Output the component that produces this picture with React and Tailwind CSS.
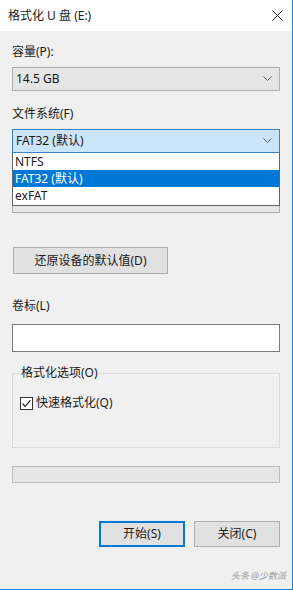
import React from 'react';

const font = { fontFamily: '"Noto Sans", "Noto Sans CJK SC", sans-serif' };

function Chevron() {
  return (
    <svg width="9" height="6" viewBox="0 0 9 6" className="shrink-0">
      <path d="M0.5 0.5 L4.5 4.5 L8.5 0.5" fill="none" stroke="#606060" strokeWidth="1" />
    </svg>
  );
}

function Combo({ value, focused, hidden }) {
  return (
    <div
      className={`h-6 flex items-center justify-between pl-[3px] pr-[7px] border ${
        focused ? 'bg-[#cce4f7] border-[#3c82c4]' : 'bg-[#e5e5e5] border-[#adadad]'
      }`}
    >
      <span className={`text-[12px] leading-4 text-[#1a1a1a] ${hidden ? 'invisible' : ''}`}>{value}</span>
      <Chevron />
    </div>
  );
}

function Button({ children, primary, className = '' }) {
  return (
    <div
      className={`flex items-center justify-center text-[12px] leading-4 text-[#1a1a1a] bg-[#e1e1e1] ${
        primary ? 'border-2 border-[#0078d7]' : 'border border-[#adadad]'
      } ${className}`}
    >
      {children}
    </div>
  );
}

export default function App() {
  return (
    <div
      className="relative w-[293px] h-[590px] bg-[#f0f0f0] border-r border-b border-[#1c7fd3] flex flex-col text-[#1a1a1a]"
      style={font}
    >
      {/* title bar */}
      <div className="h-[31px] bg-white flex items-center justify-between pl-2 pr-[9px] shrink-0">
        <span className="text-[12px] leading-4">格式化 U 盘 (E:)</span>
        <svg width="11" height="11" viewBox="0 0 11 11">
          <path d="M0.5 0.5 L10.5 10.5 M10.5 0.5 L0.5 10.5" stroke="#222" strokeWidth="1" />
        </svg>
      </div>

      <div className="flex flex-col px-3">
        <div className="mt-[13px] text-[12px] leading-4">容量(P):</div>
        <div className="mt-[7px]">
          <Combo value="14.5 GB" />
        </div>

        <div className="mt-[15px] text-[12px] leading-4">文件系统(F)</div>
        <div className="mt-[7px] relative z-10">
          <Combo value="FAT32 (默认)" focused />
          <div className="absolute left-0 right-0 top-full bg-white border border-[#646464] border-t-0 flex flex-col">
            <div className="h-[17px] flex items-center px-[2px] text-[12px]">NTFS</div>
            <div className="h-[17px] flex items-center px-[2px] text-[12px] bg-[#0078d7] text-white">FAT32 (默认)</div>
            <div className="h-[18px] flex items-center px-[2px] text-[12px]">exFAT</div>
          </div>
        </div>

        {/* allocation unit row, covered by the open list */}
        <div className="mt-[15px] text-[12px] leading-4 invisible">分配单元大小(A)</div>
        <div className="mt-[5px]">
          <Combo value="16 KB" hidden />
        </div>

        <Button className="mt-[34px] ml-[1px] w-[155px] h-[27px]">还原设备的默认值(D)</Button>

        <div className="mt-[24px] text-[12px] leading-4">卷标(L)</div>
        <div className="mt-[10px] h-[28px] bg-white border border-[#7a7a7a]" />

        <fieldset className="mt-[13px] border border-[#dcdcdc] pl-[7px] pr-2 pt-[14px] pb-[36px] min-w-0">
          <legend className="px-[1px] text-[12px] leading-4">格式化选项(O)</legend>
          <div className="flex items-center gap-[3px] h-4">
            <div className="w-[13px] h-[13px] border border-[#333] bg-white flex items-center justify-center">
              <svg width="11" height="11" viewBox="0 0 11 11">
                <path d="M1.5 5.5 L4.2 8.3 L9.5 2.2" fill="none" stroke="#222" strokeWidth="1.2" />
              </svg>
            </div>
            <span className="text-[12px] leading-4">快速格式化(Q)</span>
          </div>
        </fieldset>

        <div className="mt-[18px] h-[17px] bg-[#e6e6e6] border border-[#bcbcbc]" />

        <div className="mt-[38px] flex justify-end gap-[9px]">
          <Button primary className="w-[86px] h-[26px]">开始(S)</Button>
          <Button className="w-[86px] h-[26px]">关闭(C)</Button>
        </div>
      </div>

      <div className="absolute right-[6px] bottom-[7px] text-[9px] leading-3 italic text-[#9a9a9a]">头条 @少数派</div>
    </div>
  );
}
